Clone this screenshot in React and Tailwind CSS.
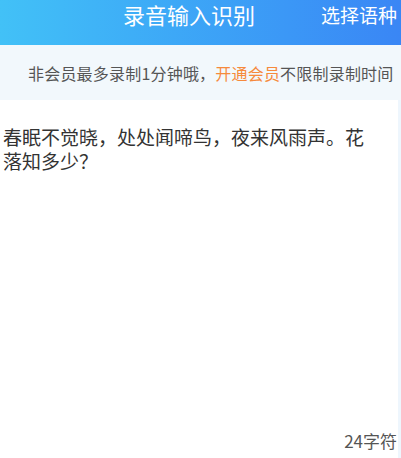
import React from 'react';

const App = () => {
  return (
    <div
      className="w-[401px] h-[458px] overflow-hidden bg-white flex flex-col"
      style={{ fontFamily: '"Noto Sans CJK SC", "Noto Sans", sans-serif' }}
    >
      {/* 顶部标题栏 */}
      <div className="h-[45px] shrink-0 flex items-start pt-[2px] bg-gradient-to-r from-[#42c1f7] to-[#3a86f5] text-white">
        <span className="ml-[123px] text-[22px] leading-[25px]">录音输入识别</span>
        <span className="ml-auto mr-[4px] text-[19px] leading-[25px]">选择语种</span>
      </div>

      {/* 会员提示 */}
      <div className="h-[55px] shrink-0 flex items-center pl-[28px] bg-[#f2f8fc] text-[16px] tracking-[0.2px] text-[#555555] whitespace-nowrap">
        非会员最多录制1分钟哦，
        <span className="text-[#f68a3c]">开通会员</span>
        不限制录制时间
      </div>

      {/* 识别结果 */}
      <div className="flex-1 flex border-r-[3px] border-[#eef6fd]">
        <div className="flex-1 flex flex-col">
          <p className="pt-[25px] pl-[3px] w-[372px] text-[19px] leading-[24px] text-[#333333]">
            春眠不觉晓，处处闻啼鸟，夜来风雨声。花落知多少？
          </p>
          <div className="mt-auto pb-[5px] pr-[1px] text-right text-[17px] leading-[24px] text-[#555555]">
            24字符
          </div>
        </div>
      </div>
    </div>
  );
};

export default App;
